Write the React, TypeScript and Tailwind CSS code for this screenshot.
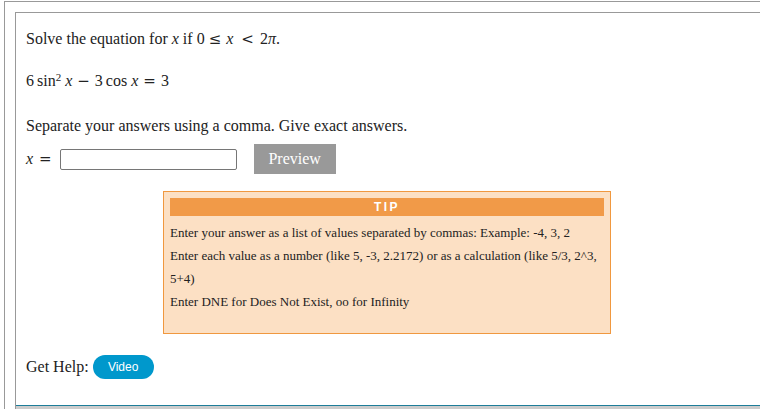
import React from "react";

function V({ children }: { children: React.ReactNode }) {
  return <span className="italic">{children}</span>;
}

function Op({ children, className }: { children: React.ReactNode; className: string }) {
  return <span className={"font-['DejaVu_Serif',serif] text-[15px] " + className}>{children}</span>;
}

export default function App() {
  return (
    <div className="h-[409px] w-[760px] overflow-hidden bg-white pl-1 pt-px font-['Liberation_Serif',serif] text-[#222]">
      <div className="h-full border-l border-t border-[#999] pl-[10px] pt-[10px]">
        <div className="flex h-full flex-col border-l border-t border-[#999]">
          <div className="h-[392px] px-[10px] pt-[14px] text-[16px]">
            <p className="leading-[24px]">
              Solve the equation for <V>x</V> if 0<Op className="ml-[4px] mr-[5px]">≤</Op>
              <V>x</V>
              <Op className="ml-[8px] mr-[6px]">&lt;</Op>2<V>π</V>.
            </p>

            <p className="mt-[18px] leading-[24px]">
              6<span className="ml-[3px]">sin</span>
              <sup className="text-[11px]">2</sup>
              <span className="ml-[4px]">
                <V>x</V>
              </span>
              <Op className="mx-[5px]">−</Op>3<span className="ml-[3px]">cos</span> <V>x</V>
              <Op className="mx-[5px]">=</Op>3
            </p>

            <p className="mt-[21px] leading-[24px]">Separate your answers using a comma. Give exact answers.</p>

            <div className="mt-[6px] flex items-center">
              <span className="leading-[24px]">
                <V>x</V>
                <Op className="ml-[6px]">=</Op>
              </span>
              <input className="ml-[8px] h-[21px] w-[177px] rounded-[2px] border border-[#767676] bg-white" />
              <button className="ml-[17px] h-[30px] w-[82px] bg-[#999] text-[16px] text-white">Preview</button>
            </div>

            <div className="ml-[137px] mt-[17px] h-[143px] w-[448px] border border-[#f0983f] bg-[#fce0c4] px-[6px] pt-[6px]">
              <div className="flex h-[18px] items-center justify-center bg-[#f19a48] font-['Liberation_Sans',sans-serif] text-[12px] font-bold tracking-[2.5px] text-white">
                TIP
              </div>
              <div className="pt-[5px] text-[13px] leading-[23px] text-[#222]">
                <p>Enter your answer as a list of values separated by commas: Example: -4, 3, 2</p>
                <p>Enter each value as a number (like 5, -3, 2.2172) or as a calculation (like 5/3, 2^3, 5+4)</p>
                <p>Enter DNE for Does Not Exist, oo for Infinity</p>
              </div>
            </div>

            <div className="mt-[21px] flex items-center">
              <span className="leading-[24px]">Get Help:</span>
              <button className="ml-[4px] h-[24px] w-[61px] rounded-full bg-[#0098cc] font-['Liberation_Sans',sans-serif] text-[12px] text-white">
                Video
              </button>
            </div>
          </div>
          <div className="h-[4px] border-t border-[#1d7d99] bg-[#ccc]" />
        </div>
      </div>
    </div>
  );
}
